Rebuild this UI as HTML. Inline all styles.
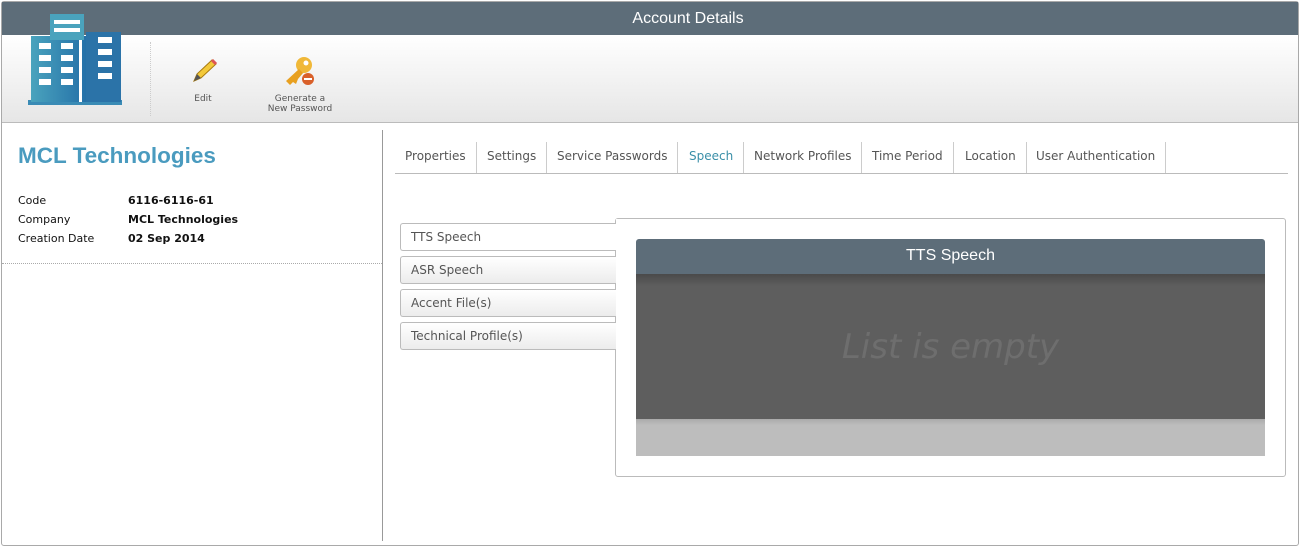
<!DOCTYPE html>
<html><head><style>
*{margin:0;padding:0;box-sizing:border-box}
body{width:1300px;height:547px;background:#fff;font-family:"DejaVu Sans",Verdana,sans-serif;position:relative;overflow:hidden}
.abs{position:absolute}
.frame{left:1px;top:1px;width:1298px;height:545px;border:1px solid #a9a9a9;border-radius:3px}
.hdr{left:2px;top:2px;width:1296px;height:33px;background:#5d6d79;color:#fff;font-family:"Liberation Sans",sans-serif;font-size:16px;text-align:center;line-height:33px;padding-left:76px}
.tb{left:2px;top:35px;width:1296px;height:88px;background:linear-gradient(#fff,#e6e6e6);border-bottom:1px solid #bbb}
.lbl{font-size:9px;color:#555;text-align:center;line-height:10px}
.name{left:18px;top:143px;font-family:"Liberation Sans",sans-serif;font-weight:bold;font-size:22.5px;color:#4a9bbf}
.k{font-size:11px;color:#111;left:18px}
.v{font-size:11px;color:#111;left:128px;font-weight:bold}
.tab{top:142px;height:31px;font-size:12px;color:#555;line-height:28px;padding:0 10px;border-right:1px solid #ccc}
.st{left:400px;width:216px;height:28px;border:1px solid #bbb;border-radius:3px 0 0 3px;background:linear-gradient(#fff,#ececec);font-size:12px;color:#555;line-height:26px;padding-left:10px;border-right:none}
</style></head><body>
<div class="abs frame"></div>
<div class="abs hdr">Account Details</div>
<div class="abs tb"></div>
<svg class="abs" style="left:26px;top:12px" width="98" height="94">
<defs><linearGradient id="g" x1="0" x2="1"><stop offset="0" stop-color="#4aa3bd"/><stop offset="1" stop-color="#2470a8"/></linearGradient></defs>
<rect x="2" y="88" width="94" height="5" fill="#3a8bb5"/>
<rect x="5" y="24" width="56" height="66" fill="url(#g)"/>
<rect x="60" y="20" width="35" height="70" fill="#2b73a8"/>
<rect x="24" y="2" width="34" height="26" fill="#4aa3bd"/>
<rect x="28" y="8" width="26" height="4" fill="#fff"/><rect x="28" y="16" width="26" height="4" fill="#fff"/>
<rect x="53" y="28" width="3" height="62" fill="#fff"/>
<g fill="#fff"><rect x="13" y="31" width="12" height="6"/><rect x="35" y="31" width="12" height="6"/><rect x="13" y="43" width="12" height="6"/><rect x="35" y="43" width="12" height="6"/><rect x="13" y="55" width="12" height="6"/><rect x="35" y="55" width="12" height="6"/><rect x="13" y="67" width="12" height="6"/><rect x="35" y="67" width="12" height="6"/>
<rect x="72" y="25" width="14" height="6"/><rect x="72" y="37" width="14" height="6"/><rect x="72" y="49" width="14" height="6"/><rect x="72" y="61" width="14" height="6"/></g>
</svg>
<div class="abs" style="left:150px;top:42px;height:74px;border-left:1px dotted #ccc"></div>
<svg class="abs" style="left:190px;top:57px" width="28" height="28"><path d="M4 24 L7 17 L22 3 L26 7 L11 21 Z" fill="#f3c93a" stroke="#a87a10" stroke-width="1"/><path d="M22 3 L26 7" stroke="#d55" stroke-width="3"/><path d="M4 24 L7 17 L11 21Z" fill="#555"/></svg>
<div class="abs lbl" style="left:183px;top:94px;width:40px">Edit</div>
<svg class="abs" style="left:282px;top:55px" width="36" height="32"><circle cx="22" cy="10" r="8" fill="#f0b838"/><circle cx="24" cy="8" r="2.5" fill="#fff"/><path d="M17 14 L4 26 L8 30 L11 27 L14 29 L16 24 L21 18Z" fill="#e8a020"/><circle cx="26" cy="24" r="6" fill="#d9602a"/><rect x="22" y="23" width="8" height="2" fill="#fff"/></svg>
<div class="abs lbl" style="left:256px;top:94px;width:88px">Generate a<br>New Password</div>
<div class="abs name">MCL Technologies</div>
<div class="abs k" style="top:194px">Code</div><div class="abs v" style="top:194px">6116-6116-61</div>
<div class="abs k" style="top:213px">Company</div><div class="abs v" style="top:213px">MCL Technologies</div>
<div class="abs k" style="top:232px">Creation Date</div><div class="abs v" style="top:232px">02 Sep 2014</div>
<div class="abs" style="left:2px;top:263px;width:380px;border-top:1px dotted #aaa"></div>
<div class="abs" style="left:382px;top:130px;height:411px;border-left:1px solid #999"></div>
<div class="abs" style="left:395px;top:173px;width:893px;border-top:1px solid #bbb"></div>
<div class="abs tab" style="left:395px">Properties</div>
<div class="abs tab" style="left:477px">Settings</div>
<div class="abs tab" style="left:547px">Service Passwords</div>
<div class="abs tab" style="left:679px;color:#3a8fa8">Speech</div>
<div class="abs tab" style="left:744px">Network Profiles</div>
<div class="abs tab" style="left:862px">Time Period</div>
<div class="abs tab" style="left:955px">Location</div>
<div class="abs tab" style="left:1026px">User Authentication</div>
<div class="abs" style="left:615px;top:218px;width:671px;height:259px;border:1px solid #bbb;border-radius:3px"></div>
<div class="abs st" style="top:223px;background:#fff">TTS Speech</div>
<div class="abs st" style="top:256px">ASR Speech</div>
<div class="abs st" style="top:289px">Accent File(s)</div>
<div class="abs st" style="top:322px">Technical Profile(s)</div>
<div class="abs" style="left:616px;top:219px;width:2px;height:30px;background:#fff"></div>
<div class="abs" style="left:636px;top:239px;width:629px;height:35px;background:#5d6d79;border-radius:3px 3px 0 0;color:#fff;font-family:'Liberation Sans',sans-serif;font-size:16px;text-align:center;line-height:33px">TTS Speech</div>
<div class="abs" style="left:636px;top:274px;width:629px;height:145px;background:linear-gradient(#4a4a4a,#5e5e5e 12px);color:#6e6e6e;font-size:34px;font-style:italic;text-align:center;line-height:146px">List is empty</div>
<div class="abs" style="left:636px;top:419px;width:629px;height:37px;background:linear-gradient(#aaa,#bdbdbd 6px)"></div>
</body></html>
